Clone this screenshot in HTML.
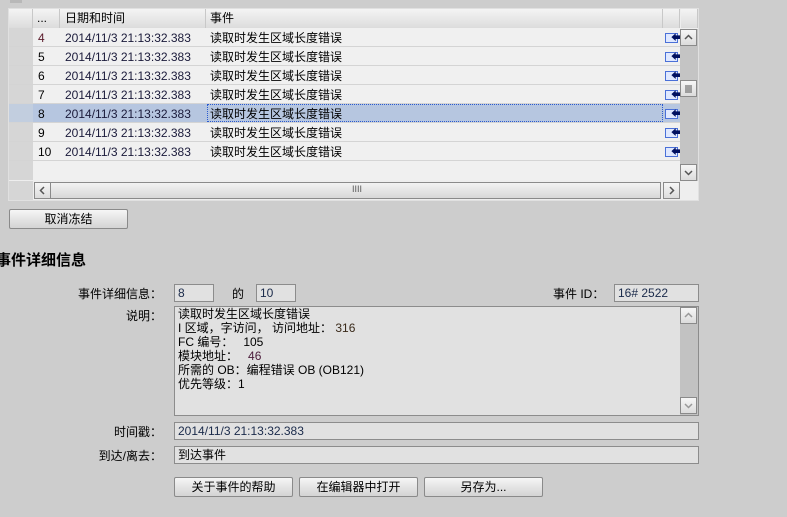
<!DOCTYPE html>
<html><head><meta charset="utf-8"><style>
*{box-sizing:border-box;margin:0;padding:0}
body{width:787px;height:517px;background:#cdcdcd;position:relative;overflow:hidden;font-family:"Liberation Sans","Noto Sans CJK SC",sans-serif;font-size:12px;color:#000}
.a{position:absolute}
.hdr{background:linear-gradient(#f4f4f4,#dcdcdc);border-right:1px solid #c8c8c8;height:19px;line-height:19px}
.row{position:absolute;left:9px;width:671px;height:19px;border-bottom:1px solid #d4d4d4;background:#f0f0f0;line-height:20px}
.row span{position:absolute}
.field{position:absolute;background:#e1e1e1;border:1px solid #8c8c8c;height:18px;line-height:17px;padding-left:3px;color:#1a2a4a}
.btn{position:absolute;height:20px;border:1px solid #8a8a8a;border-radius:2px;background:linear-gradient(#f6f6f6,#e4e4e4 50%,#d4d4d4);text-align:center;line-height:19px}
.sb{position:absolute;width:17px;height:17px;border:1px solid #8a8a8a;background:linear-gradient(#f6f6f6,#dcdcdc)}
.sb svg{position:absolute;left:3px;top:3px}
.lbl{position:absolute;text-align:right;width:152px}
.mail{position:absolute;left:656px;top:5px;width:13px;height:10px;border:1px solid #4a70d8;background:#dfe8ff}
.arr{position:absolute;left:662px;top:0px;font-size:11px;color:#001060;font-weight:bold}
</style></head><body>
<div class="a" style="left:10px;top:0;width:12px;height:3px;background:#b8b8b8"></div>
<div class="a" style="left:8px;top:8px;width:691px;height:193px;background:#eeeeee;border:1px solid #e0e0e0"></div>
<div class="a hdr" style="left:9px;top:9px;width:24px"></div>
<div class="a hdr" style="left:33px;top:9px;width:27px;padding-left:4px">...</div>
<div class="a hdr" style="left:60px;top:9px;width:146px;padding-left:5px">日期和时间</div>
<div class="a hdr" style="left:206px;top:9px;width:457px;padding-left:4px">事件</div>
<div class="a hdr" style="left:663px;top:9px;width:17px"></div>
<div class="a hdr" style="left:681px;top:9px;width:17px"></div>

<div class="row" style="top:28px"><span style="left:0;width:24px;height:18px;background:#d6d6d6"></span><span style="left:29px;color:#5a1a2a">4</span><span style="left:56px;color:#1a1a3a">2014/11/3 21:13:32.383</span><span style="left:201px">读取时发生区域长度错误</span><span class="mail"></span><span class="arr">⬅</span></div>
<div class="row" style="top:47px"><span style="left:0;width:24px;height:18px;background:#d6d6d6"></span><span style="left:29px">5</span><span style="left:56px;color:#1a1a3a">2014/11/3 21:13:32.383</span><span style="left:201px">读取时发生区域长度错误</span><span class="mail"></span><span class="arr">⬅</span></div>
<div class="row" style="top:66px"><span style="left:0;width:24px;height:18px;background:#d6d6d6"></span><span style="left:29px">6</span><span style="left:56px;color:#1a1a3a">2014/11/3 21:13:32.383</span><span style="left:201px">读取时发生区域长度错误</span><span class="mail"></span><span class="arr">⬅</span></div>
<div class="row" style="top:85px"><span style="left:0;width:24px;height:18px;background:#d6d6d6"></span><span style="left:29px">7</span><span style="left:56px;color:#1a1a3a">2014/11/3 21:13:32.383</span><span style="left:201px">读取时发生区域长度错误</span><span class="mail"></span><span class="arr">⬅</span></div>
<div class="row" style="top:104px;background:#b6c6e0"><span style="left:0;width:24px;height:18px;background:#c2cedf"></span><span style="left:29px">8</span><span style="left:56px;color:#1a1a3a">2014/11/3 21:13:32.383</span><span style="left:198px;top:0;width:456px;height:18px;border:1px dotted #2a5ad0;padding-left:2px;line-height:18px">读取时发生区域长度错误</span><span class="mail"></span><span class="arr">⬅</span></div>
<div class="row" style="top:123px"><span style="left:0;width:24px;height:18px;background:#d6d6d6"></span><span style="left:29px">9</span><span style="left:56px;color:#1a1a3a">2014/11/3 21:13:32.383</span><span style="left:201px">读取时发生区域长度错误</span><span class="mail"></span><span class="arr">⬅</span></div>
<div class="row" style="top:142px"><span style="left:0;width:24px;height:18px;background:#d6d6d6"></span><span style="left:29px">10</span><span style="left:56px;color:#1a1a3a">2014/11/3 21:13:32.383</span><span style="left:201px">读取时发生区域长度错误</span><span class="mail"></span><span class="arr">⬅</span></div>
<div class="row" style="top:161px;border-bottom:none"><span style="left:0;width:24px;height:19px;background:#d6d6d6"></span></div>

<div class="a" style="left:680px;top:29px;width:18px;height:152px;background:#c4c4c4"></div>
<div class="sb" style="left:680px;top:29px"><svg width="9" height="9"><path d="M1 6 L4.5 2.5 L8 6" stroke="#555" stroke-width="1.5" fill="none"/></svg></div>
<div class="sb" style="left:680px;top:80px"><svg width="9" height="9"><path d="M1 2H8M1 4H8M1 6H8M1 8H8" stroke="#555" stroke-width="1" fill="none"/></svg></div>
<div class="sb" style="left:680px;top:164px"><svg width="9" height="9"><path d="M1 3 L4.5 6.5 L8 3" stroke="#555" stroke-width="1.5" fill="none"/></svg></div>

<div class="a" style="left:9px;top:181px;width:24px;height:19px;background:#d6d6d6"></div>
<div class="a" style="left:34px;top:182px;width:627px;height:17px;border:1px solid #8a8a8a;background:linear-gradient(#f2f2f2,#d8d8d8)"></div>
<div class="sb" style="left:34px;top:182px"><svg width="9" height="9"><path d="M6 1 L2.5 4.5 L6 8" stroke="#555" stroke-width="1.5" fill="none"/></svg></div>
<div class="a" style="left:352px;top:184px;font-size:9px;color:#555">IIII</div>
<div class="sb" style="left:663px;top:182px"><svg width="9" height="9"><path d="M3 1 L6.5 4.5 L3 8" stroke="#555" stroke-width="1.5" fill="none"/></svg></div>

<div class="btn" style="left:9px;top:209px;width:119px">取消冻结</div>
<div class="a" style="left:-4px;top:249px;font-size:15px;font-weight:bold">事件详细信息</div>

<div class="lbl" style="left:10px;top:285px">事件详细信息：</div>
<div class="field" style="left:174px;top:284px;width:40px">8</div>
<div class="a" style="left:232px;top:285px">的</div>
<div class="field" style="left:256px;top:284px;width:40px">10</div>
<div class="a" style="left:553px;top:285px">事件 ID：</div>
<div class="field" style="left:614px;top:284px;width:85px">16# 2522</div>

<div class="lbl" style="left:10px;top:307px">说明：</div>
<div class="a" style="left:174px;top:306px;width:525px;height:110px;background:#e1e1e1;border:1px solid #8c8c8c;padding:0 3px;line-height:14px">读取时发生区域长度错误<br>I 区域，字访问， 访问地址： <span style="color:#3a2a1a">316</span><br>FC 编号： &nbsp; 105<br>模块地址： &nbsp; <span style="color:#4a1a3a">46</span><br>所需的 OB：编程错误 OB (OB121)<br>优先等级：1</div>
<div class="a" style="left:680px;top:307px;width:18px;height:108px;background:#c2c2c2"></div>
<div class="sb" style="left:680px;top:307px"><svg width="9" height="9"><path d="M1 6 L4.5 2.5 L8 6" stroke="#999" stroke-width="1.5" fill="none"/></svg></div>
<div class="sb" style="left:680px;top:397px"><svg width="9" height="9"><path d="M1 3 L4.5 6.5 L8 3" stroke="#999" stroke-width="1.5" fill="none"/></svg></div>

<div class="lbl" style="left:10px;top:423px">时间戳：</div>
<div class="field" style="left:174px;top:422px;width:525px">2014/11/3 21:13:32.383</div>
<div class="lbl" style="left:10px;top:447px">到达/离去：</div>
<div class="field" style="left:174px;top:446px;width:525px;color:#000">到达事件</div>

<div class="btn" style="left:174px;top:477px;width:119px">关于事件的帮助</div>
<div class="btn" style="left:299px;top:477px;width:119px">在编辑器中打开</div>
<div class="btn" style="left:424px;top:477px;width:119px">另存为...</div>
</body></html>
